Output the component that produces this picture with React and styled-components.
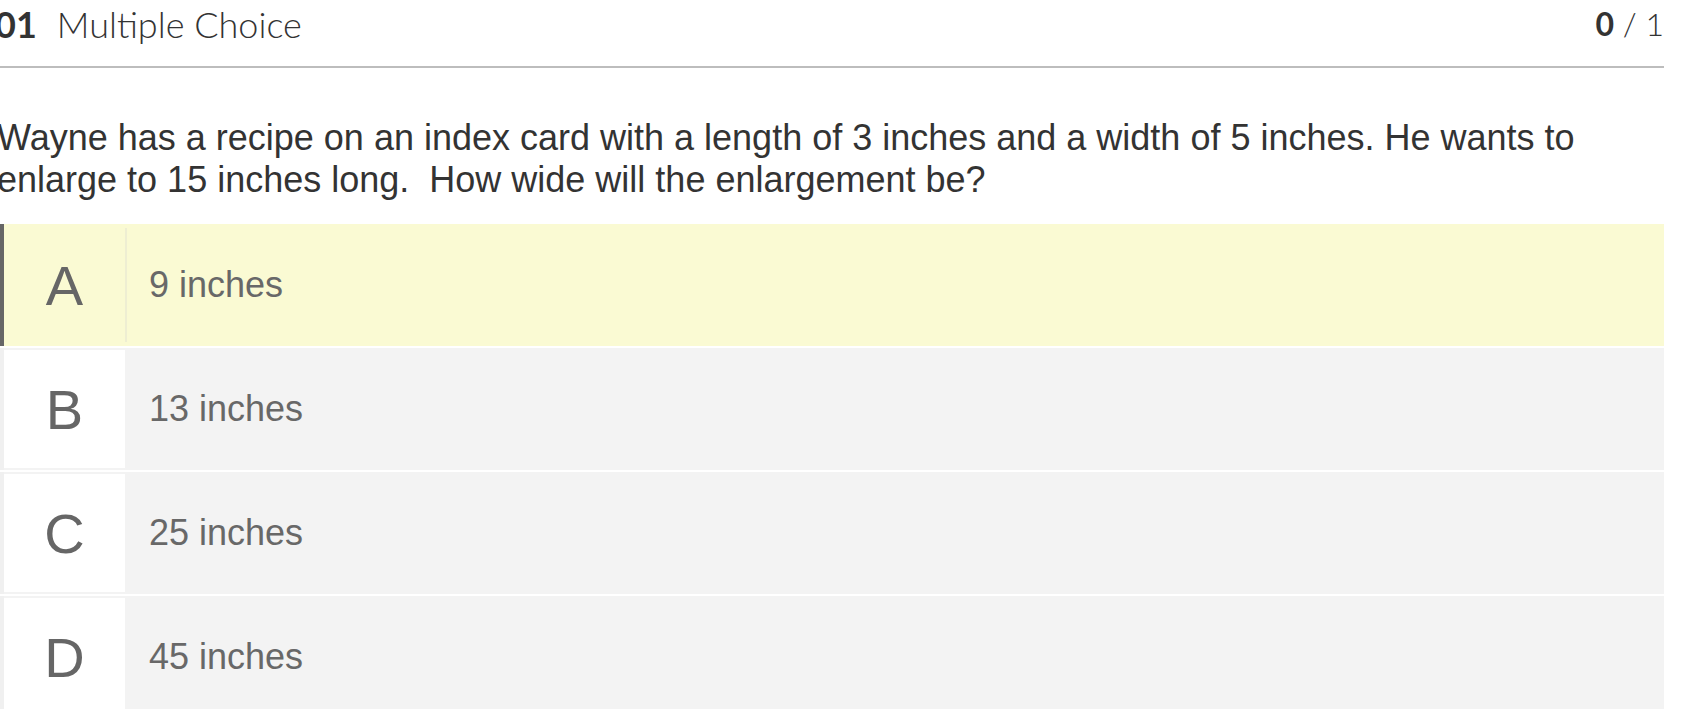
import React from 'react'
import styled, { createGlobalStyle } from 'styled-components'

const GlobalStyle = createGlobalStyle`
  body {
    margin: 0;
    background: #ffffff;
    font-family: 'Liberation Sans', Arial, sans-serif;
    overflow: hidden;
  }
`

const Page = styled.div`
  width: 1664px;
`

const Header = styled.div`
  display: flex;
  justify-content: space-between;
  align-items: flex-start;
  height: 68px;
  padding-top: 4px;
  box-sizing: border-box;
  border-bottom: 2px solid #bdbdbd;
  font-family: 'Lato', sans-serif;
  line-height: 40px;
  color: #333333;
`

const Title = styled.div`
  margin-left: -5px;
  font-size: 36px;
  font-weight: 300;
  b {
    font-weight: 700;
    margin-right: 20px;
  }
`

const Score = styled.div`
  font-size: 32px;
  font-weight: 300;
  b {
    font-weight: 700;
  }
`

const Question = styled.p`
  margin: 49px 0 23px -3px;
  font-size: 36px;
  line-height: 42px;
  color: #333333;
  width: 1640px;
`

const Options = styled.div`
  display: flex;
  flex-direction: column;
  gap: 2px;
`

const Row = styled.div`
  display: flex;
  align-items: stretch;
  height: 122px;
  box-sizing: border-box;
  background: ${({ $active }) => ($active ? '#fafad3' : '#f3f3f3')};
  border-left: 4px solid ${({ $active }) => ($active ? '#666666' : '#f0f0f0')};
  padding: ${({ $active }) => ($active ? '0' : '2px 0')};
`

const Letter = styled.div`
  flex: 0 0 123px;
  display: flex;
  align-items: center;
  justify-content: center;
  box-sizing: border-box;
  background: ${({ $active }) => ($active ? 'transparent' : '#ffffff')};
  border-right: 2px solid ${({ $active }) => ($active ? '#eeeed2' : '#f3f3f3')};
  margin: ${({ $active }) => ($active ? '4px 0' : '0')};
  font-size: 56px;
  color: #666666;
`

const Answer = styled.div`
  display: flex;
  align-items: center;
  padding-left: 22px;
  font-size: 36px;
  color: #686868;
`

const choices = [
  { id: 'A', text: '9 inches' },
  { id: 'B', text: '13 inches' },
  { id: 'C', text: '25 inches' },
  { id: 'D', text: '45 inches' },
]

export default function App() {
  return (
    <Page>
      <GlobalStyle />
      <Header>
        <Title>
          <b>01</b>Multiple Choice
        </Title>
        <Score>
          <b>0</b> / 1
        </Score>
      </Header>
      <Question>
        Wayne has a recipe on an index card with a length of 3 inches and a width of 5 inches. He wants to
        enlarge to 15 inches long.&nbsp; How wide will the enlargement be?
      </Question>
      <Options>
        {choices.map(({ id, text }) => (
          <Row key={id} $active={id === 'A'}>
            <Letter $active={id === 'A'}>{id}</Letter>
            <Answer>{text}</Answer>
          </Row>
        ))}
      </Options>
    </Page>
  )
}
